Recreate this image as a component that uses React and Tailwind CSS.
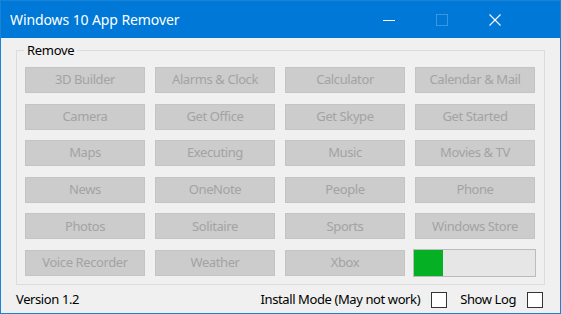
import React from "react";

const apps = [
  "3D Builder", "Alarms & Clock", "Calculator", "Calendar & Mail",
  "Camera", "Get Office", "Get Skype", "Get Started",
  "Maps", "Executing", "Music", "Movies & TV",
  "News", "OneNote", "People", "Phone",
  "Photos", "Solitaire", "Sports", "Windows Store",
  "Voice Recorder", "Weather", "Xbox",
];

export default function App() {
  return (
    <div
      className="w-[561px] h-[314px] border border-[#1883d7] bg-[#f0f0f0] flex flex-col overflow-hidden"
      style={{ fontFamily: '"Noto Sans", "Open Sans", sans-serif' }}
    >
      <div className="h-[37px] shrink-0 bg-[#0078d7] flex items-center text-white">
        <div className="pl-[9px] text-[14px] leading-none flex-1 tracking-[-0.1px]">Windows 10 App Remover</div>
        <div className="flex items-center h-full mr-[39px]">
          <div className="w-[53px] h-full flex items-center justify-center">
            <svg width="12" height="12" viewBox="0 0 12 12"><path d="M0 6.5H12" stroke="white" strokeWidth="1" /></svg>
          </div>
          <div className="w-[53px] h-full flex items-center justify-center">
            <svg width="12" height="12" viewBox="0 0 12 12"><rect x="0.5" y="0.5" width="11" height="11" fill="none" stroke="#3c96dd" strokeWidth="1" /></svg>
          </div>
          <div className="w-[53px] h-full flex items-center justify-center">
            <svg width="12" height="12" viewBox="0 0 12 12"><path d="M0.5 0.5L11.5 11.5M11.5 0.5L0.5 11.5" stroke="white" strokeWidth="1.1" /></svg>
          </div>
        </div>
      </div>

      <fieldset className="ml-[15px] mt-[5px] w-[529px] border border-[#dcdcdc] px-[8px] pt-[10px] pb-[7px]">
        <legend className="-ml-[1px] px-[3px] text-[13px] leading-[14px] text-black tracking-[-0.3px]">Remove</legend>
        <div className="grid grid-cols-[repeat(4,120px)] gap-x-[10px] gap-y-[10.6px]">
          {apps.map((a) => (
            <div
              key={a}
              className="h-[26px] bg-[#cccccc] border border-[#c4c4c4] flex items-center justify-center text-[13px] text-[#a3a3a3] tracking-[-0.4px] whitespace-nowrap"
            >
              {a}
            </div>
          ))}
          <div className="h-[28px] -mt-[1px] -ml-[2px] w-[123px] bg-[#e6e6e6] border border-[#bcbcbc] flex">
            <div className="w-[29px] h-full bg-[#06b025]" />
          </div>
        </div>
      </fieldset>

      <div className="flex items-center mt-[5px] pl-[15px] pr-[17px] text-[13px] text-black tracking-[-0.4px]">
        <div className="flex-1">Version 1.2</div>
        <div>Install Mode (May not work)</div>
        <div className="ml-[11px] w-[16px] h-[16px] border border-[#333333] bg-white" />
        <div className="ml-[13px]">Show Log</div>
        <div className="ml-[11px] w-[16px] h-[16px] border border-[#333333] bg-white" />
      </div>
    </div>
  );
}
